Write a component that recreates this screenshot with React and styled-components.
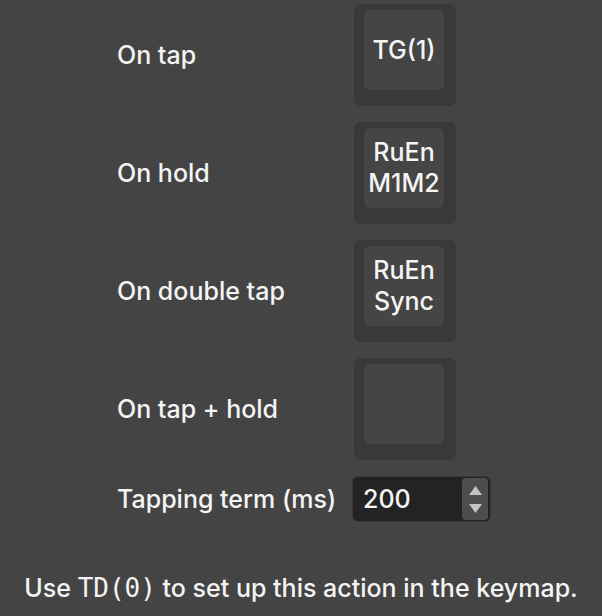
import React from 'react';
import styled, { createGlobalStyle } from 'styled-components';

const GlobalStyle = createGlobalStyle`
  html, body {
    margin: 0;
    padding: 0;
    background: #444444;
  }
  body {
    font-family: Inter, "Noto Sans", "Liberation Sans", sans-serif;
    color: #f4f4f4;
  }
`;

const Page = styled.div`
  width: 602px;
  height: 616px;
  background: #444444;
  display: flex;
  flex-direction: column;
  box-sizing: border-box;
  padding-top: 4px;
`;

const Form = styled.div`
  display: grid;
  grid-template-columns: 235px auto;
  row-gap: 16px;
  padding-left: 117px;
  align-items: center;
`;

const Label = styled.div`
  font-size: 25px;
  font-weight: 500;
  color: #f4f4f4;
`;

const KeyCell = styled.div`
  padding-left: 2px;
`;

const KeyOuter = styled.div`
  width: 102px;
  height: 102px;
  box-sizing: border-box;
  background: #393939;
  border-radius: 7px;
  padding: 6px 12px 16px 10px;
`;

const KeyInner = styled.div`
  width: 80px;
  height: 80px;
  background: #454545;
  border-radius: 6px;
  display: flex;
  align-items: center;
  justify-content: center;
  text-align: center;
  font-size: 25px;
  font-weight: 500;
  line-height: 31px;
  color: #f4f4f4;
`;

const NumberBox = styled.div`
  width: 139px;
  height: 46px;
  box-sizing: border-box;
  background: #232323;
  border: 1px solid #383838;
  border-radius: 6px;
  display: flex;
  align-items: center;
  justify-content: space-between;
  padding: 0 2px 0 10px;
`;

const NumberValue = styled.span`
  font-size: 25px;
  font-weight: 500;
  color: #f4f4f4;
`;

const Stepper = styled.div`
  width: 26px;
  height: 42px;
  box-sizing: border-box;
  background: #4d4d4d;
  border-radius: 4px;
  display: flex;
  flex-direction: column;
  align-items: center;
  justify-content: center;
  gap: 9px;
`;

const Hint = styled.div`
  margin-top: 51px;
  text-align: center;
  font-size: 25px;
  font-weight: 500;
  color: #f4f4f4;
`;

const Code = styled.span`
  font-family: "DejaVu Sans Mono", "Liberation Mono", monospace;
  font-size: 26px;
  font-weight: 500;
`;

const Arrow = ({ down }) => (
  <svg width="13" height="9" viewBox="0 0 13 9">
    <path d={down ? 'M0 0 H13 L6.5 9 Z' : 'M6.5 0 L13 9 H0 Z'} fill="#c4c4c4" />
  </svg>
);

const actions = [
  { label: 'On tap', key: ['TG(1)'] },
  { label: 'On hold', key: ['RuEn', 'M1M2'] },
  { label: 'On double tap', key: ['RuEn', 'Sync'] },
  { label: 'On tap + hold', key: [] },
];

const App = () => (
  <>
    <GlobalStyle />
    <Page>
      <Form>
        {actions.map(a => (
          <React.Fragment key={a.label}>
            <Label>{a.label}</Label>
            <KeyCell>
              <KeyOuter>
                <KeyInner>
                  <div>
                    {a.key.map((line, i) => (
                      <div key={i}>{line}</div>
                    ))}
                  </div>
                </KeyInner>
              </KeyOuter>
            </KeyCell>
          </React.Fragment>
        ))}
        <Label>Tapping term (ms)</Label>
        <NumberBox>
          <NumberValue>200</NumberValue>
          <Stepper>
            <Arrow />
            <Arrow down />
          </Stepper>
        </NumberBox>
      </Form>
      <Hint>
        Use <Code>TD(0)</Code> to set up this action in the keymap.
      </Hint>
    </Page>
  </>
);

export default App;
